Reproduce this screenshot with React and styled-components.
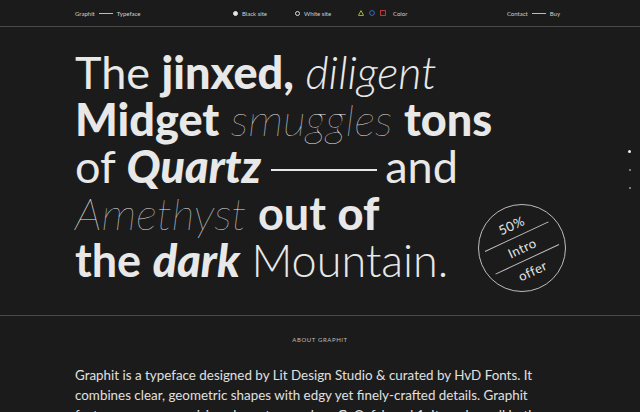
import React from "react";
import styled, { createGlobalStyle } from "styled-components";

const Global = createGlobalStyle`
  html, body { margin: 0; padding: 0; background: #1b1b1b; }
  body { font-family: "Lato", "Noto Sans", sans-serif; color: #e6e6e6; overflow: hidden; }
`;

const Page = styled.div`
  width: 640px;
  height: 412px;
  background: #1b1b1b;
  overflow: hidden;
  position: relative;
`;

const Nav = styled.nav`
  height: 27px;
  border-bottom: 1px solid #4a4a4a;
  display: grid;
  grid-template-columns: 158px 62px 63px 1fr auto;
  align-items: center;
  padding: 0 80px 0 75px;
  box-sizing: border-box;
  font-size: 6px;
  color: #cfcfcf;
  font-family: "Lato", sans-serif;
`;

const NavItem = styled.div`
  display: flex;
  align-items: center;
  gap: ${(p) => p.$gap || 4}px;
`;

const Dash = styled.span`
  display: inline-block;
  width: ${(p) => p.$w || 14}px;
  border-top: 1px solid #bbb;
`;

const Dot = styled.span`
  width: 5px;
  height: 5px;
  border-radius: 50%;
  box-sizing: border-box;
  border: 1px solid #ddd;
  background: ${(p) => (p.$filled ? "#e6e6e6" : "transparent")};
`;

const Hero = styled.section`
  position: relative;
  height: 289px;
  border-bottom: 1px solid #4a4a4a;
  padding: 22px 0 0 75px;
  box-sizing: border-box;
`;

const Headline = styled.h1`
  margin: 0;
  font-size: 45px;
  line-height: 47px;
  font-weight: 400;
  color: #e8e8e8;
  letter-spacing: 0;
`;

const W = styled.span`
  font-weight: ${(p) => p.$w || 400};
  font-style: ${(p) => (p.$i ? "italic" : "normal")};
`;

const Rule = styled.span`
  display: inline-block;
  width: 106px;
  border-top: 2px solid #e8e8e8;
  vertical-align: middle;
  margin: 0 -3px 0 -2px;
  position: relative;
  top: -2px;
`;

const Badge = styled.div`
  position: absolute;
  left: 478px;
  top: 177px;
  width: 88px;
  height: 88px;
  border: 1px solid #bdbdbd;
  border-radius: 50%;
  box-sizing: border-box;
  display: flex;
  align-items: center;
  justify-content: center;
`;

const BadgeInner = styled.div`
  transform: rotate(-25deg);
  display: flex;
  flex-direction: column;
  align-items: center;
  gap: 5px;
`;

const BadgeText = styled.span`
  font-size: 13px;
  line-height: 14px;
  color: #e6e6e6;
  letter-spacing: 0.5px;
`;

const BadgeLine = styled.span`
  width: 70px;
  border-top: 1px solid #bdbdbd;
`;

const SideDots = styled.div`
  position: absolute;
  right: 9px;
  top: 123px;
  display: flex;
  flex-direction: column;
  gap: 16px;
  align-items: center;
`;

const SideDot = styled.span`
  width: ${(p) => (p.$active ? 3 : 2)}px;
  height: ${(p) => (p.$active ? 3 : 2)}px;
  border-radius: 50%;
  background: ${(p) => (p.$active ? "#f0f0f0" : "#9a9a9a")};
`;

const About = styled.section`
  padding: 20px 100px 0 75px;
`;

const Label = styled.div`
  text-align: center;
  font-size: 6px;
  letter-spacing: 0.6px;
  color: #bdbdbd;
  padding-left: 25px;
  margin-bottom: 22px;
`;

const Para = styled.p`
  margin: 0;
  font-size: 13.4px;
  line-height: 20px;
  color: #e0e0e0;
  width: 480px;
`;

export default function App() {
  return (
    <>
      <Global />
      <Page>
        <Nav>
          <NavItem>
            Graphit <Dash /> Typeface
          </NavItem>
          <NavItem>
            <Dot $filled /> Black site
          </NavItem>
          <NavItem>
            <Dot /> White site
          </NavItem>
          <NavItem $gap={5}>
            <svg width="6" height="6" viewBox="0 0 6 6">
              <polygon points="3,0.6 5.6,5.4 0.4,5.4" fill="none" stroke="#b9c13a" strokeWidth="0.9" />
            </svg>
            <svg width="6" height="6" viewBox="0 0 6 6">
              <circle cx="3" cy="3" r="2.4" fill="none" stroke="#3d6fd8" strokeWidth="0.9" />
            </svg>
            <svg width="6" height="6" viewBox="0 0 6 6">
              <rect x="0.6" y="0.6" width="4.8" height="4.8" fill="none" stroke="#d8403a" strokeWidth="0.9" />
            </svg>
            <span style={{ marginLeft: 2 }}>Color</span>
          </NavItem>
          <NavItem>
            Contact <Dash /> Buy
          </NavItem>
        </Nav>
        <Hero>
          <Headline>
            <W>The </W>
            <W $w={900}>jinxed,</W> <W $w={300} $i>diligent</W>
            <br />
            <W $w={900}>Midget</W> <W $w={100} $i>smuggles</W> <W $w={900}>tons</W>
            <br />
            <W>of </W>
            <W $w={900} $i>Quartz</W> <Rule /> <W>and</W>
            <br />
            <W $w={100} $i>Amethyst</W> <W $w={700}>out</W> <W $w={900}>of</W>
            <br />
            <W $w={700}>the</W> <W $w={900} $i>dark</W> <W $w={300}>Mountain.</W>
          </Headline>
          <Badge>
            <BadgeInner>
              <BadgeText>50%</BadgeText>
              <BadgeLine />
              <BadgeText>Intro</BadgeText>
              <BadgeLine />
              <BadgeText>offer</BadgeText>
            </BadgeInner>
          </Badge>
          <SideDots>
            <SideDot $active />
            <SideDot />
            <SideDot />
          </SideDots>
        </Hero>
        <About>
          <Label>ABOUT GRAPHIT</Label>
          <Para>
            Graphit is a typeface designed by Lit Design Studio &amp; curated by HvD Fonts. It
            combines clear, geometric shapes with edgy yet finely-crafted details. Graphit
            features uncompromising characters such as G, Q, f, k and 1. It works well both for
            headlines and body copy.
          </Para>
        </About>
      </Page>
    </>
  );
}
